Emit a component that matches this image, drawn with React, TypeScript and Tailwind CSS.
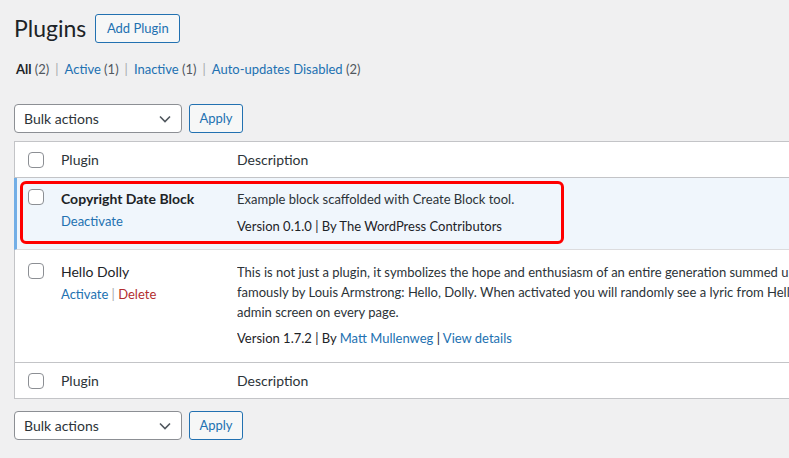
import React from "react";

const font = { fontFamily: 'Lato, "Noto Sans", Arial, sans-serif' };

function Checkbox() {
  return <span className="block w-4 h-4 rounded-[4px] border border-[#8c8f94] bg-white" />;
}

function BulkBar() {
  return (
    <div className="flex items-center gap-[7px]">
      <div className="w-[168px] h-[29px] flex items-center justify-between pl-[9px] pr-[10px] bg-white border border-[#8c8f94] rounded-[4px] text-[14px] text-[#2c3338]">
        <span>Bulk actions</span>
        <svg width="12" height="8" viewBox="0 0 12 8" fill="none" stroke="#50575e" strokeWidth="1.6">
          <path d="M1 1.5l5 5 5-5" />
        </svg>
      </div>
      <button className="h-[29px] w-[54px] bg-[#f6f7f7] border border-[#2271b1] rounded-[3px] text-[13px] text-[#2271b1]">
        Apply
      </button>
    </div>
  );
}

function HeadRow({ top }: { top?: boolean }) {
  return (
    <div
      className={`flex items-center h-[36px] bg-white text-[14px] text-[#2c3338] ${
        top ? "border-b border-[#c3c4c7]" : "border-t border-[#c3c4c7]"
      }`}
    >
      <div className="w-[46px] pl-[13px]">
        <Checkbox />
      </div>
      <div className="w-[176px]">Plugin</div>
      <div>Description</div>
    </div>
  );
}

export default function App() {
  return (
    <div className="min-h-[458px] bg-[#f0f0f1] pl-[14px] pt-[14px] overflow-hidden" style={font}>
      <div className="flex items-center gap-[9px]">
        <h1 className="text-[23px] leading-[29px] text-[#1d2327] font-normal">Plugins</h1>
        <button className="h-[29px] w-[85px] bg-[#f6f7f7] border border-[#2271b1] rounded-[3px] text-[13px] text-[#2271b1]">
          Add Plugin
        </button>
      </div>

      <div className="mt-[17px] pl-[2px] text-[13px] leading-[18px] text-[#50575e] whitespace-nowrap">
        <span className="font-bold text-[#1d2327]">All</span> (2)
        <span className="text-[#a7aaad] mx-[6px]">|</span>
        <span className="text-[#2271b1]">Active</span> (1)
        <span className="text-[#a7aaad] mx-[6px]">|</span>
        <span className="text-[#2271b1]">Inactive</span> (1)
        <span className="text-[#a7aaad] mx-[6px]">|</span>
        <span className="text-[#2271b1]">Auto-updates Disabled</span> (2)
      </div>

      <div className="mt-[26px]">
        <BulkBar />
      </div>

      <div className="relative mt-[8px] w-[900px] border border-[#c3c4c7] bg-white">
        <HeadRow top />

        <div className="relative flex h-[72px] bg-[#f0f6fc] border-b border-[#dcdcde] -ml-px border-l-[3px] border-l-[#72aee6] text-[13px]">
          <div className="w-[44px] pl-[11px] pt-[11px]">
            <Checkbox />
          </div>
          <div className="w-[176px] pt-[11px]">
            <div className="font-bold text-[14px] text-[#1d2327] leading-[20px]">Copyright Date Block</div>
            <div className="mt-[2px] text-[#2271b1] leading-[20px]">Deactivate</div>
          </div>
          <div className="pt-[11px] text-[#2c3338]">
            <div className="leading-[20px]">Example block scaffolded with Create Block tool.</div>
            <div className="mt-[7px] leading-[20px] text-[#1d2327]">
              Version 0.1.0 | By The WordPress Contributors
            </div>
          </div>
          <div className="absolute left-[3px] top-[3px] w-[544px] h-[63px] border-[3px] border-[#ff0000] rounded-[6px] pointer-events-none" />
        </div>

        <div className="flex h-[112px] text-[13px]">
          <div className="w-[46px] pl-[13px] pt-[13px]">
            <Checkbox />
          </div>
          <div className="w-[176px] pt-[12px]">
            <div className="text-[14px] text-[#1d2327] leading-[20px]">Hello Dolly</div>
            <div className="mt-[2px] leading-[20px] text-[#2271b1]">
              Activate <span className="text-[#a7aaad]">|</span> <span className="text-[#b32d2e]">Delete</span>
            </div>
          </div>
          <div className="pt-[12px] text-[#2c3338] min-w-0 flex-1 overflow-hidden">
            <div className="leading-[20px] whitespace-nowrap">
              This is not just a plugin, it symbolizes the hope and enthusiasm of an entire generation summed up in two words sung most
            </div>
            <div className="leading-[20px] whitespace-nowrap">
              famously by Louis Armstrong: Hello, Dolly. When activated you will randomly see a lyric from Hello, Dolly in the upper right of your
            </div>
            <div className="leading-[20px] whitespace-nowrap">admin screen on every page.</div>
            <div className="mt-[6px] leading-[20px] text-[#1d2327] whitespace-nowrap">
              Version 1.7.2 | By <span className="text-[#2271b1]">Matt Mullenweg</span>{" "}
              <span>|</span> <span className="text-[#2271b1]">View details</span>
            </div>
          </div>
        </div>

        <HeadRow />
      </div>

      <div className="mt-[12px]">
        <BulkBar />
      </div>
    </div>
  );
}
